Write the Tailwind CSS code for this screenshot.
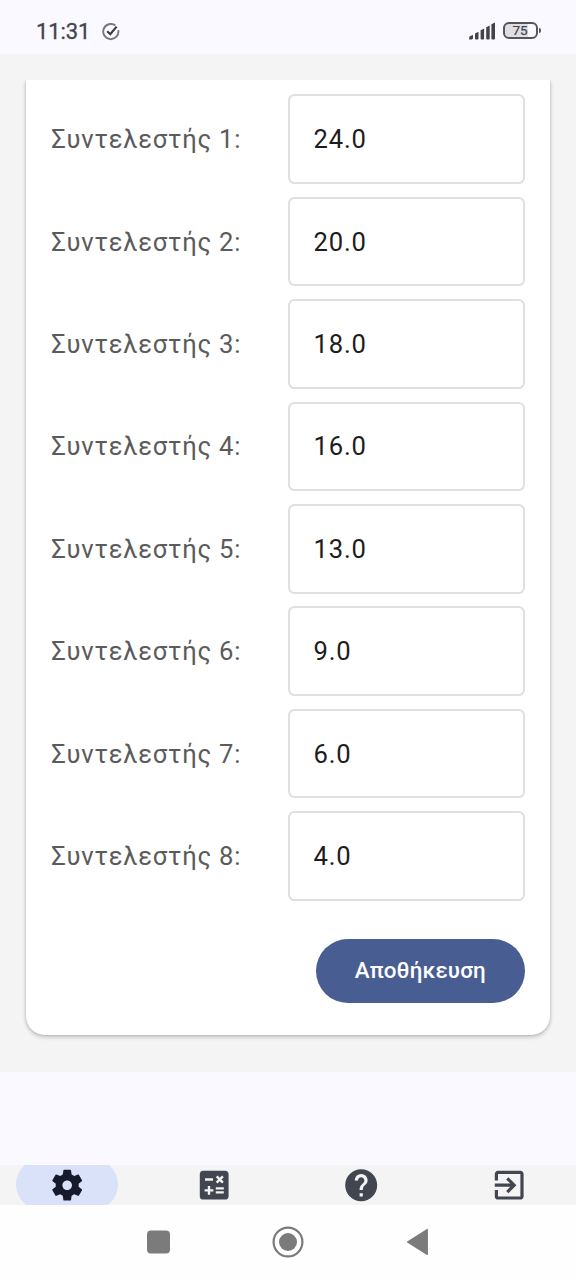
<!DOCTYPE html>
<html lang="el">
<head>
  <meta charset="UTF-8" />
  <meta name="viewport" content="width=device-width, initial-scale=1" />
  <title>Συντελεστές</title>
  <script src="https://cdn.jsdelivr.net/npm/@tailwindcss/browser@4"></script>
</head>
<body class="w-[576px] h-[1280px] flex flex-col overflow-hidden bg-[#f9f9ff] font-['Roboto','Noto_Sans',sans-serif]">

  <!-- Status bar -->
  <header class="h-[54px] shrink-0 flex items-start justify-between pl-9 pr-[35.5px] pt-[18px] text-[#43434a]">
    <div class="flex items-center gap-[12px]">
      <span class="w-[54px] text-[22px] leading-7 font-normal tracking-[-0.1px] [-webkit-text-stroke:0.3px_#43434a]">11:31</span>
      <svg class="w-[18px] h-[18px]" viewBox="0 0 18 18" fill="none">
        <path d="M13.4 2.5A7.6 7.6 0 1 0 16.3 7.2" stroke="#77777c" stroke-width="1.9" />
        <path d="M5.2 8.2l3.1 3L14.6 3.6" stroke="#3a3a40" stroke-width="2.2" />
      </svg>
    </div>
    <div class="flex items-start gap-[7px] pt-1">
      <svg class="w-[27px] h-[18px]" viewBox="0 0 27 18" fill="#43434a">
        <path d="M0.2 17.4v-1.9q0-1.1 1.2-1.6L4 12.9v3.2q0 1.3-1.3 1.3z" />
        <path d="M6 11.5l3.5-1.7v6.6q0 1-1 1H7q-1 0-1-1z" />
        <path d="M11.6 8.3l3.5-1.7v9.8q0 1-1 1h-1.5q-1 0-1-1z" />
        <path d="M17.2 5.3l3.5-1.7v12.8q0 1-1 1h-1.5q-1 0-1-1z" />
        <path d="M22.4 2.2L26 .5v15.900q0 1-1 1h-1.600q-1 0-1-1z" />
      </svg>
      <div class="flex items-center gap-px">
        <div class="w-[35px] h-[17px] flex items-center justify-center rounded-[6px] border-2 border-[#55555a] bg-linear-to-r from-[#dedee4] from-75% to-[#f9f9ff] to-75% text-[13.5px] leading-none font-normal [-webkit-text-stroke:0.2px_#43434a]">75</div>
        <div class="w-[2px] h-[5px] rounded-r-sm bg-[#55555a]"></div>
      </div>
    </div>
  </header>

  <main class="h-[1018px] shrink-0 bg-[#f4f4f4] pt-[26px]">
    <div class="h-[992px] overflow-hidden px-[25.6px]">
      <section class="h-[955px] bg-white rounded-b-[19px] px-[25.6px] pt-[14.4px] shadow-[0_2px_4px_rgba(0,0,0,0.22),0_0_3px_rgba(0,0,0,0.12)]">
        <div id="rows" class="flex flex-col gap-[12.8px]"></div>
        <div class="flex justify-end pt-[38.4px]">
          <button class="w-[209px] h-16 rounded-full bg-[#485d92] text-white text-[22.4px] font-medium tracking-[0.1px]">Αποθήκευση</button>
        </div>
      </section>
    </div>
  </main>

  <!-- Bottom navigation -->
  <nav class="mt-[93px] h-10 shrink-0 flex gap-[12.8px] overflow-hidden bg-[#f4f4f4] text-[#424651] pb-[0.6px]">
    <a class="flex-1 flex items-center justify-center">
      <span class="w-[102.4px] h-[51.2px] shrink-0 flex items-center justify-center rounded-full bg-[#dae2fa] text-[#151b2d]">
        <svg class="w-[38.4px] h-[38.4px]" viewBox="0 0 24 24" fill="currentColor"><path d="M19.14 12.94c.04-.3.06-.61.06-.94 0-.32-.02-.64-.07-.94l2.03-1.58c.18-.14.23-.41.12-.61l-1.92-3.32c-.12-.22-.37-.29-.59-.22l-2.39.96c-.5-.38-1.03-.7-1.62-.94l-.36-2.54c-.04-.24-.24-.41-.48-.41h-3.84c-.24 0-.43.17-.47.41l-.36 2.54c-.59.24-1.13.57-1.62.94l-2.39-.96c-.22-.08-.47 0-.59.22L2.74 8.87c-.12.21-.08.47.12.61l2.03 1.58c-.05.3-.09.63-.09.94s.02.64.07.94l-2.03 1.58c-.18.14-.23.41-.12.61l1.92 3.32c.12.22.37.29.59.22l2.39-.96c.5.38 1.03.7 1.62.94l.36 2.54c.05.24.24.41.48.41h3.84c.24 0 .44-.17.47-.41l.36-2.54c.59-.24 1.13-.56 1.62-.94l2.39.96c.22.08.47 0 .59-.22l1.92-3.32c.12-.22.07-.47-.12-.61l-2.01-1.58zM12 15c-1.66 0-3-1.34-3-3s1.34-3 3-3 3 1.34 3 3-1.34 3-3 3z" /></svg>
      </span>
    </a>
    <a class="flex-1 flex items-center justify-center">
      <svg class="w-[38.4px] h-[38.4px]" viewBox="0 0 24 24" fill="currentColor"><path d="M19 3H5c-1.1 0-2 .9-2 2v14c0 1.1.9 2 2 2h14c1.1 0 2-.9 2-2V5c0-1.1-.9-2-2-2zm-5.97 4.06L14.09 6l1.41 1.41L16.91 6l1.06 1.06-1.41 1.41 1.41 1.41-1.06 1.06-1.41-1.4-1.41 1.41-1.06-1.06 1.41-1.41-1.41-1.42zm-6.78.66h5v1.5h-5v-1.5zM11.5 16h-2v2H8v-2H6v-1.5h2v-2h1.5v2h2V16zm6.5 1.25h-5v-1.5h5v1.5zm0-2.5h-5v-1.5h5v1.5z" /></svg>
    </a>
    <a class="flex-1 flex items-center justify-center">
      <svg class="w-[38.4px] h-[38.4px]" viewBox="0 0 24 24" fill="currentColor"><path d="M12 2C6.48 2 2 6.48 2 12s4.48 10 10 10 10-4.48 10-10S17.52 2 12 2zm1 17h-2v-2h2v2zm2.07-7.75l-.9.92C13.45 12.9 13 13.5 13 15h-2v-.5c0-1.1.45-2.1 1.17-2.83l1.24-1.26c.37-.36.59-.86.59-1.41 0-1.1-.9-2-2-2s-2 .9-2 2H8c0-2.21 1.79-4 4-4s4 1.79 4 4c0 .88-.36 1.68-.93 2.25z" /></svg>
    </a>
    <a class="flex-1 flex items-center justify-center">
      <svg class="w-[38.4px] h-[38.4px]" viewBox="0 0 24 24" fill="currentColor"><path d="M10.09 15.59L11.5 17l5-5-5-5-1.41 1.41L12.67 11H3v2h9.67l-2.58 2.59zM19 3H5c-1.11 0-2 .9-2 2v4h2V5h14v14H5v-4H3v4c0 1.1.89 2 2 2h14c1.1 0 2-.9 2-2V5c0-1.1-.9-2-2-2z" /></svg>
    </a>
  </nav>

  <!-- System buttons -->
  <footer class="h-[75px] shrink-0 flex justify-center gap-[98px] items-center bg-[#fefefe] pb-[0.6px]">
    <svg class="w-8 h-8" viewBox="0 0 32 32"><rect x="5" y="4.5" width="23" height="23" rx="4" fill="#7b7b7b" /></svg>
    <svg class="w-8 h-8" viewBox="0 0 32 32"><circle cx="16" cy="16" r="14.4" fill="none" stroke="#7b7b7b" stroke-width="2.2" /><circle cx="16" cy="16" r="9" fill="#7b7b7b" /></svg>
    <svg class="w-8 h-8" viewBox="0 0 32 32"><path d="M5.5 16L25.3 3.5v25z" fill="#7b7b7b" stroke="#7b7b7b" stroke-width="1.2" stroke-linejoin="round" /></svg>
  </footer>

  <script>
    const values = ['24.0', '20.0', '18.0', '16.0', '13.0', '9.0', '6.0', '4.0'];
    const rows = document.getElementById('rows');

    values.forEach((value, i) => {
      const row = document.createElement('div');
      row.className = 'flex items-center justify-between h-[89.6px] text-[25.6px] tracking-[0.75px]';
      row.innerHTML = `
        <span class="pt-[0.6px] text-[#5b5b5b]">Συντελεστής ${i + 1}:</span>
        <div class="w-[236.8px] h-full flex items-center rounded-[6.4px] border-2 border-[#e0e0e0] pl-[23.6px] pt-[0.6px] text-[#1d1d20]">${value}</div>
      `;
      rows.appendChild(row);
    });
  </script>

</body>
</html>
